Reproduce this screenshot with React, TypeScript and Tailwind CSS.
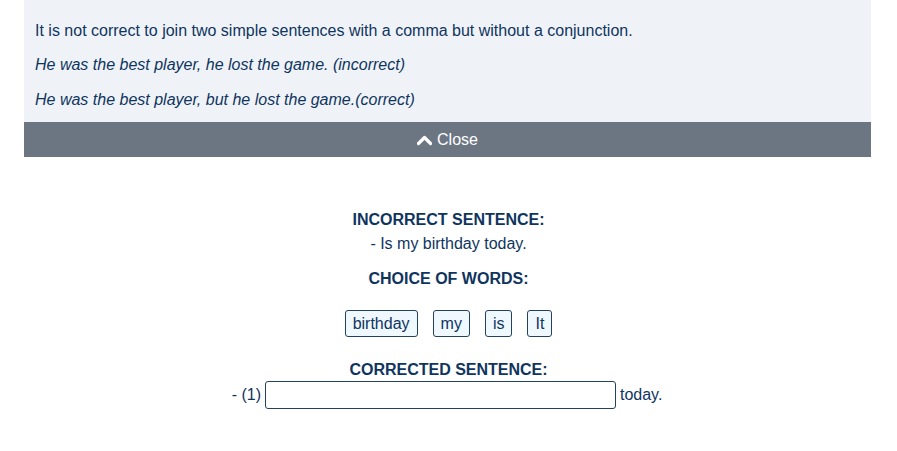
const words = ['birthday', 'my', 'is', 'It']

export default function App() {
  return (
    <div className="w-[897px] h-[451px] bg-white font-['Liberation_Sans',Arial,sans-serif] text-[#0f355e]">
      {/* Explanation panel */}
      <div className="ml-[24px] w-[847px]">
        <div className="bg-[#eff3f8] px-[11px] pt-[20px] pb-[11px] text-[16px] leading-[22px]">
          <p>It is not correct to join two simple sentences with a comma but without a conjunction.</p>
          <p className="mt-[12px] italic">He was the best player, he lost the game. (incorrect)</p>
          <p className="mt-[13px] italic">He was the best player, but he lost the game.(correct)</p>
        </div>
        <button className="flex h-[35px] w-full items-center justify-center gap-[5px] bg-[#6c7683] text-[16px] text-white">
          <svg width="15" height="11" viewBox="0 0 15 11" className="mt-[1px]">
            <path d="M1.5 8.5 L7.5 2.5 L13.5 8.5" fill="none" stroke="white" strokeWidth="3.2" strokeLinecap="round" strokeLinejoin="round" />
          </svg>
          Close
        </button>
      </div>

      {/* Exercise */}
      <div className="mt-[52px] flex flex-col items-center text-[16px]">
        <h3 className="font-bold leading-[22px]">INCORRECT SENTENCE:</h3>
        <p className="mt-[2px] leading-[22px]">- Is my birthday today.</p>
        <h3 className="mt-[13px] font-bold leading-[22px]">CHOICE OF WORDS:</h3>
        <div className="mt-[20px] flex gap-[15px]">
          {words.map(w => (
            <span key={w} className="h-[27px] rounded-[3px] border border-[#23425f] bg-[#f0f8ff] px-[7px] leading-[25px]">
              {w}
            </span>
          ))}
        </div>
        <h3 className="mt-[22px] font-bold leading-[22px]">CORRECTED SENTENCE:</h3>
        <div className="ml-[-3px] flex items-center gap-[4px]">
          <span>- (1)</span>
          <input className="h-[28px] w-[351px] rounded-[3px] border border-[#23425f] bg-white outline-none" />
          <span>today.</span>
        </div>
      </div>
    </div>
  )
}
